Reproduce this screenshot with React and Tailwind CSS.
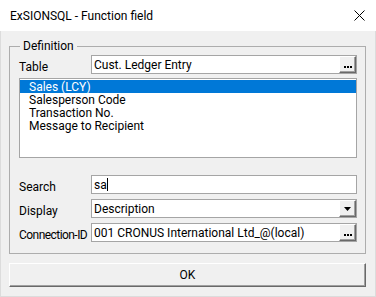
import { useState } from "react";

const font = { fontFamily: 'Roboto, "Noto Sans", sans-serif' };

function RaisedButton({ children, className = "" }) {
  return (
    <div
      className={`flex items-center justify-center bg-[#f0f0f0] border border-t-white border-l-white border-r-[#696969] border-b-[#696969] shadow-[inset_-1px_-1px_0_#a0a0a0] ${className}`}
    >
      {children}
    </div>
  );
}

function Dots() {
  return (
    <div className="flex gap-[1px] mt-[5px]">
      <span className="size-[2px] bg-black" />
      <span className="size-[2px] bg-black" />
      <span className="size-[2px] bg-black" />
    </div>
  );
}

function Field({ label, value, button, caret, tight }) {
  return (
    <div className="flex items-start h-[19px]">
      <span
        className={`w-[72px] shrink-0 pt-[5px] text-[12px] leading-[15px] text-black whitespace-nowrap ${
          tight ? "tracking-[-0.55px]" : ""
        }`}
      >
        {label}
      </span>
      <div className="flex-1 flex items-center h-[19px] bg-white border border-[#a5a5a5]">
        <span className="flex-1 pl-[2px] pt-[1px] text-[12px] leading-[15px] text-black whitespace-nowrap overflow-hidden">
          {value}
          {caret && <span className="inline-block w-[1px] h-[13px] bg-black align-middle -mt-[2px]" />}
        </span>
        {button === "dots" && (
          <RaisedButton className="w-[17px] h-[17px]">
            <Dots />
          </RaisedButton>
        )}
        {button === "drop" && (
          <RaisedButton className="w-[17px] h-[17px]">
            <svg width="7" height="4" viewBox="0 0 7 4">
              <path d="M0 0h7L3.5 4z" fill="#000" />
            </svg>
          </RaisedButton>
        )}
      </div>
    </div>
  );
}

export default function App() {
  const [selected] = useState(0);
  const items = ["Sales (LCY)", "Salesperson Code", "Transaction No.", "Message to Recipient"];

  return (
    <div className="w-[376px] h-[297px] flex flex-col bg-[#f0f0f0] select-none" style={font}>
      {/* title bar */}
      <div className="h-[31px] bg-white flex items-center justify-between pl-[10px] pr-[10px]">
        <span className="text-[12px] leading-[16px] text-black">ExSIONSQL - Function field</span>
        <svg width="11" height="11" viewBox="0 0 11 11" className="mr-[1px]">
          <path d="M0.5 0.5l10 10M10.5 0.5l-10 10" stroke="#000" strokeWidth="1" />
        </svg>
      </div>

      <div className="flex-1 flex flex-col border border-t-0 border-[#dcdcdc] pl-[8px] pr-[9px] pt-[15px]">
        {/* group box */}
        <div className="relative h-[208px] border border-[#adadad] pl-[9px] pr-[8px] pt-[8px] flex flex-col">
          <span className="absolute -top-[8px] left-[10px] px-[3px] bg-[#f0f0f0] text-[12px] leading-[15px] text-black">
            Definition
          </span>

          <Field label="Table" value="Cust. Ledger Entry" button="dots" />

          <div className="mt-[4px] h-[80px] bg-white border border-[#a5a5a5] pt-[1px]">
            {items.map((item, i) => (
              <div
                key={item}
                className={`h-[13px] pl-[9px] text-[12px] leading-[15px] whitespace-nowrap ${
                  i === selected ? "bg-[#0078d7] text-white" : "text-black"
                }`}
              >
                {item}
              </div>
            ))}
          </div>

          <div className="mt-[17px] flex flex-col gap-[5px]">
            <Field label="Search" value="sa" caret />
            <Field label="Display" value="Description" button="drop" />
            <Field label="Connection-ID" value="001 CRONUS International Ltd_@(local)" button="dots" tight />
          </div>
        </div>

        {/* OK button */}
        <RaisedButton className="mt-[9px] h-[24px]">
          <span className="text-[12px] leading-[16px] text-black">OK</span>
        </RaisedButton>
      </div>
    </div>
  );
}
